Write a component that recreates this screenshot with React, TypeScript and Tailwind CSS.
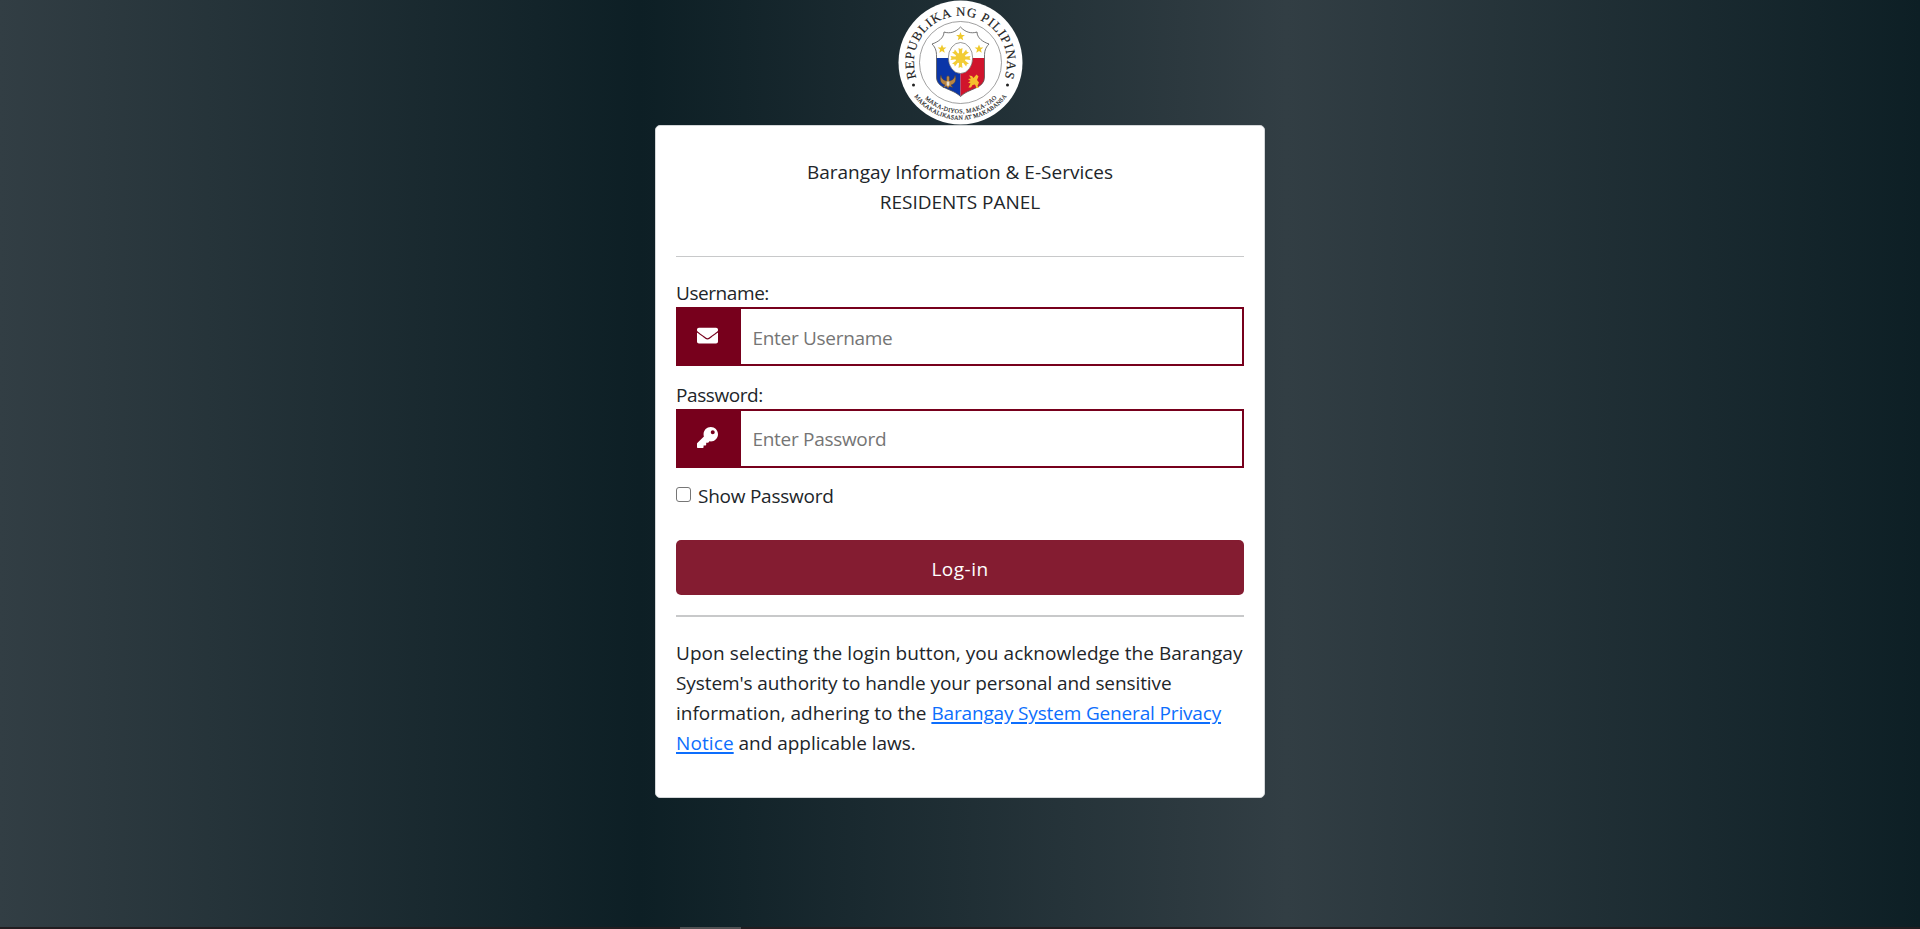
import React from "react";

const FONT = "font-['Segoe_UI','Open_Sans',sans-serif]";
const SHIELD =
  "M62.5 27C58 32 52 34 46 32C46 38 40 42 34 44C38 48 38.5 52 38.5 56V77C38.5 89 54 88 62.5 96.5C71 88 86.5 89 86.5 77V56C86.5 52 87 48 91 44C85 42 79 38 79 32C73 34 67 32 62.5 27Z";

function Star({ x, y }: { x: number; y: number }) {
  return (
    <path
      transform={`translate(${x} ${y})`}
      d="M0-4.6 1.2-1.5 4.4-1.4 1.9.6 2.7 3.7 0 1.9-2.7 3.7-1.9.6-4.4-1.4-1.2-1.5Z"
      fill="#efc92c"
    />
  );
}

function Seal() {
  const rays = [0, 45, 90, 135, 180, 225, 270, 315];
  return (
    <svg width="125" height="125" viewBox="0 0 125 125" className="block">
      <defs>
        <path id="top" d="M19.76 81.1A46.6 46.6 0 1 1 105.24 81.1" />
        <path id="inner" d="M21.5 92.6A51 51 0 0 0 103.5 92.6" />
        <path id="outer" d="M13.1 91.5A57.3 57.3 0 0 0 111.9 91.5" />
        <clipPath id="shield">
          <path d={SHIELD} />
        </clipPath>
      </defs>
      <circle cx="62.5" cy="62.5" r="62" fill="#fff" />
      <circle cx="62.5" cy="62.5" r="41" fill="none" stroke="#777" strokeWidth=".7" />
      <g clipPath="url(#shield)">
        <path d="M30 20H95V58H30Z" fill="#fff" />
        <path d="M30 58H62.5V100H30Z" fill="#0a35a8" />
        <path d="M62.5 58H95V100H62.5Z" fill="#d0142c" />
      </g>
      <path d={SHIELD} fill="none" stroke="#555" strokeWidth=".8" />
      <Star x={62.5} y={36.5} />
      <Star x={44} y={49} />
      <Star x={81} y={49} />
      <ellipse cx="62.5" cy="58" rx="12.2" ry="15.5" fill="#fff" stroke="#555" strokeWidth=".6" />
      {rays.map((a) => (
        <path key={a} transform={`translate(62.5 58) rotate(${a})`} d="M-1.3-4 -2-10 0-9 2-10 1.3-4Z" fill="#f2cc35" />
      ))}
      <circle cx="62.5" cy="58" r="5.2" fill="#f2cc35" />
      <path d="M43 75C44 80 46 80 48.500 81V77L50 75.500L51.500 77V81C54 80 56 80 57 75C59 80 57 84 53 85L55 87.500L51.500 86.500L50 88.500L48.500 86.500L45 87.500L47 85C43 84 41 80 43 75Z" fill="#b98543" stroke="#3c3a45" strokeWidth=".5" />
      <path d="M48.700 81.500H51.300V85L50 86.200L48.700 85Z" fill="#e8e0d0" />
      <path d="M71 75.500L74 76L75.500 78L78.500 74.500L80.500 76.500L79 80L81 82.500L79.500 86L81 88H78.500L77 84.500L74.500 85L73 87.500H70.500L72.500 83.500L70 82.500L72.500 81L70 79L73 78.500Z" fill="#f5bf2d" />
      <g className="font-['Liberation_Serif',serif]" fill="#222" stroke="#222" strokeWidth=".15">
        <text fontSize="13" textLength="177" lengthAdjust="spacing"><textPath href="#top" startOffset="3.5">REPUBLIKA NG PILIPINAS</textPath></text>
        <text fontSize="6" textLength="80"><textPath href="#inner" startOffset="8">MAKA-DIYOS, MAKA-TAO</textPath></text>
        <text fontSize="6" textLength="107"><textPath href="#outer" startOffset="6">MAKAKALIKASAN AT MAKABANSA</textPath></text>
      </g>
      <circle cx="15.5" cy="85" r="1.5" fill="#222" />
      <circle cx="109.5" cy="85" r="1.5" fill="#222" />
    </svg>
  );
}

function MailIcon() {
  return (
    <svg width="21" height="21" viewBox="0 0 512 512" fill="currentColor">
      <path d="M502.3 190.8c3.9-3.1 9.7-.2 9.7 4.7V400c0 26.5-21.5 48-48 48H48c-26.5 0-48-21.5-48-48V195.6c0-5 5.7-7.8 9.7-4.7 22.4 17.4 52.1 39.5 154.1 113.6 21.1 15.4 56.7 47.8 92.2 47.6 35.7.3 72-32.8 92.3-47.6 102-74.1 131.6-96.3 154-113.7zM256 320c23.2.4 56.6-29.2 73.4-41.4 132.7-96.3 142.8-104.7 173.4-128.7 5.8-4.5 9.2-11.5 9.2-18.9v-19c0-26.5-21.5-48-48-48H48c-26.5 0-48 21.5-48 48v19c0 7.4 3.4 14.3 9.2 18.9 30.6 23.9 40.7 32.4 173.4 128.7 16.8 12.2 50.2 41.8 73.4 41.4z" />
    </svg>
  );
}

function KeyIcon() {
  return (
    <svg width="21" height="21" viewBox="0 0 512 512" fill="currentColor">
      <path d="M512 176.001C512 273.203 433.202 352 336 352c-11.22 0-22.19-1.062-32.827-3.069l-24.012 27.014A23.999 23.999 0 0 1 261.223 384H224v40c0 13.255-10.745 24-24 24h-40v40c0 13.255-10.745 24-24 24H24c-13.255 0-24-10.745-24-24v-78.059c0-6.365 2.529-12.47 7.029-16.971l161.802-161.802C163.108 213.814 160 195.271 160 176 160 78.798 238.797.001 335.999 0 433.488-.001 512 78.511 512 176.001zM336 128c0 26.51 21.49 48 48 48s48-21.49 48-48-21.49-48-48-48-48 21.49-48 48z" />
    </svg>
  );
}

function Field({ label, type, placeholder, inputClass, icon }: {
  label: string; type: string; placeholder: string; inputClass: string; icon: React.ReactNode;
}) {
  return (
    <div>
      <label className="block h-[30px] pt-px leading-[30px] tracking-[-0.43px]">{label}</label>
      <div className="flex h-[59px] bg-[#77001c]">
        <div className="flex w-[65px] items-center justify-center pb-[3px] pr-[2px] text-white">{icon}</div>
        <input
          type={type}
          placeholder={placeholder}
          className={"min-w-0 flex-1 border-2 border-l-0 border-[#77001c] bg-white px-[11.5px] tracking-[-0.3px] outline-none placeholder:text-[#757575] " + inputClass}
        />
      </div>
    </div>
  );
}

const LINK = "text-[#0d6efd] underline decoration-2 underline-offset-2";

export default function App() {
  const [show, setShow] = React.useState(false);
  return (
    <div className={"flex h-[929px] flex-col overflow-hidden bg-[linear-gradient(to_right,#323e44_0%,#0d1f25_33.3%,#323e44_67%,#0d1f25_100%)] text-[19px] leading-[30px] text-[#212529] " + FONT}>
      <div className="flex flex-1 flex-col items-center">
        <Seal />
        <main className="h-[673px] w-[610px] rounded-[5px] border border-[#d3d6d8] bg-white px-5">
          <header className="mt-[31px] text-center">
            <p className="tracking-[0.01px]">Barangay Information &amp; E-Services</p>
            <p className="tracking-[-0.02px]">RESIDENTS PANEL</p>
          </header>
          <hr className="mt-[39px] border-t border-[#c8c9ca]" />
          <div className="mt-5">
            <Field label="Username:" inputClass="pt-[2px]" type="text" placeholder="Enter Username" icon={<MailIcon />} />
          </div>
          <div className="mt-[13px]">
            <Field label="Password:" inputClass="pt-0" type={show ? "text" : "password"} placeholder="Enter Password" icon={<KeyIcon />} />
          </div>
          <label className="mt-[13px] flex h-[30px] items-center">
            <input type="checkbox" checked={show} onChange={() => setShow(!show)} className="mb-[3px] mr-[7px] size-[15px] appearance-none rounded-[3px] border border-[#767676] bg-white" />
            <span className="tracking-[-0.25px]">Show Password</span>
          </label>
          <button className="mt-[29px] flex h-[55px] w-full items-center justify-center rounded-[5px] bg-[#841c31] pt-[2px] font-medium tracking-[0.5px] text-white">
            Log-in
          </button>
          <hr className="mt-5 border-t-2 border-[#c8c9ca]" />
          <div className="mt-[21px] whitespace-nowrap">
            <p className="tracking-[0.055px]">Upon selecting the login button, you acknowledge the Barangay</p>
            <p className="tracking-[-0.09px]">System's authority to handle your personal and sensitive</p>
            <p className="tracking-[-0.015px]">information, adhering to the <a className={LINK + " tracking-[-0.16px]"} href="#privacy">Barangay System General Privacy</a></p>
            <p className="tracking-[-0.04px]"><a className={LINK + " tracking-[0.1px]"} href="#privacy">Notice</a> and applicable laws.</p>
          </div>
        </main>
      </div>
      <footer className="flex h-[2px] bg-[#211d20]"><div className="ml-[680px] h-full w-[61px] bg-[#505052]" /></footer>
    </div>
  );
}
